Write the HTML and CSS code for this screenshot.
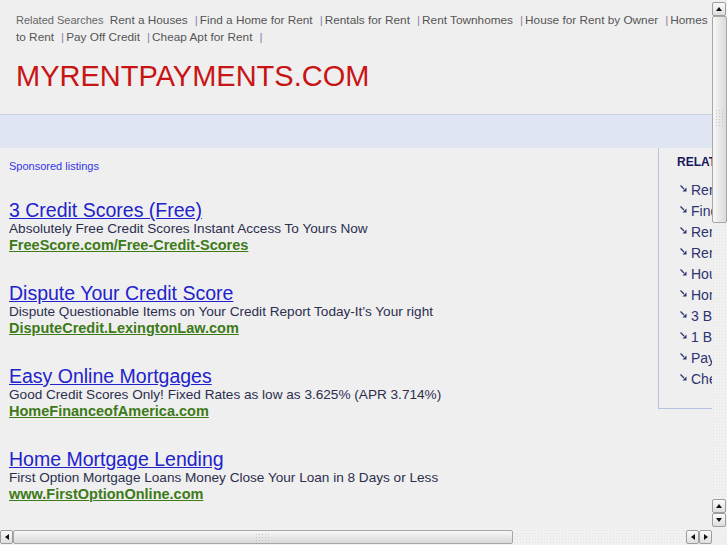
FILE: index.html
```html
<!DOCTYPE html>
<html lang="en">

<head>
    <meta charset="UTF-8">
    <title>myrentpayments.com</title>
    <link rel="stylesheet" href="styles.css">
</head>

<body>
    <div class="viewport">
        <div class="header">
            <div class="related">
                <span class="related-label">Related Searches</span>
                <a href="#">Rent a Houses</a><span class="sep">|</span><a href="#">Find a Home for Rent</a><span class="sep">|</span><a href="#">Rentals for Rent</a><span class="sep">|</span><a href="#">Rent Townhomes</a><span class="sep">|</span><a href="#">House for Rent by Owner</a><span class="sep">|</span><a href="#">Homes to Rent</a><span class="sep">|</span><a href="#">Pay Off Credit</a><span class="sep">|</span><a href="#">Cheap Apt for Rent</a><span class="sep">|</span>
            </div>
            <h1 class="site-title">MYRENTPAYMENTS.COM</h1>
        </div>

        <div class="band"></div>

        <div class="content">
            <div class="main">
                <div class="sponsored">Sponsored listings</div>

                <div class="ad">
                    <a href="#" class="ad-title">3 Credit Scores (Free)</a>
                    <div class="ad-desc">Absolutely Free Credit Scores Instant Access To Yours Now</div>
                    <a href="#" class="ad-url">FreeScore.com/Free-Credit-Scores</a>
                </div>

                <div class="ad">
                    <a href="#" class="ad-title">Dispute Your Credit Score</a>
                    <div class="ad-desc">Dispute Questionable Items on Your Credit Report Today-It's Your right</div>
                    <a href="#" class="ad-url">DisputeCredit.LexingtonLaw.com</a>
                </div>

                <div class="ad">
                    <a href="#" class="ad-title">Easy Online Mortgages</a>
                    <div class="ad-desc">Good Credit Scores Only! Fixed Rates as low as 3.625% (APR 3.714%)</div>
                    <a href="#" class="ad-url">HomeFinanceofAmerica.com</a>
                </div>

                <div class="ad">
                    <a href="#" class="ad-title">Home Mortgage Lending</a>
                    <div class="ad-desc">First Option Mortgage Loans Money Close Your Loan in 8 Days or Less</div>
                    <a href="#" class="ad-url">www.FirstOptionOnline.com</a>
                </div>
            </div>

            <div class="sidebar">
                <h3>RELATED SEARCHES</h3>
                <ul class="side-links">
                    <li><svg class="arrow" width="7" height="7" viewBox="0 0 7 7"><path d="M0.5 0.5 L4 4" stroke="#2a3070" stroke-width="1.2"/><path d="M6.5 2.5 L6.5 6.5 L2.5 6.5 Z" fill="#2a3070"/></svg><a href="#">Rent a Houses</a></li>
                    <li><svg class="arrow" width="7" height="7" viewBox="0 0 7 7"><path d="M0.5 0.5 L4 4" stroke="#2a3070" stroke-width="1.2"/><path d="M6.5 2.5 L6.5 6.5 L2.5 6.5 Z" fill="#2a3070"/></svg><a href="#">Find a Home for Rent</a></li>
                    <li><svg class="arrow" width="7" height="7" viewBox="0 0 7 7"><path d="M0.5 0.5 L4 4" stroke="#2a3070" stroke-width="1.2"/><path d="M6.5 2.5 L6.5 6.5 L2.5 6.5 Z" fill="#2a3070"/></svg><a href="#">Rentals for Rent</a></li>
                    <li><svg class="arrow" width="7" height="7" viewBox="0 0 7 7"><path d="M0.5 0.5 L4 4" stroke="#2a3070" stroke-width="1.2"/><path d="M6.5 2.5 L6.5 6.5 L2.5 6.5 Z" fill="#2a3070"/></svg><a href="#">Rent Townhomes</a></li>
                    <li><svg class="arrow" width="7" height="7" viewBox="0 0 7 7"><path d="M0.5 0.5 L4 4" stroke="#2a3070" stroke-width="1.2"/><path d="M6.5 2.5 L6.5 6.5 L2.5 6.5 Z" fill="#2a3070"/></svg><a href="#">House for Rent by Owner</a></li>
                    <li><svg class="arrow" width="7" height="7" viewBox="0 0 7 7"><path d="M0.5 0.5 L4 4" stroke="#2a3070" stroke-width="1.2"/><path d="M6.5 2.5 L6.5 6.5 L2.5 6.5 Z" fill="#2a3070"/></svg><a href="#">Homes to Rent</a></li>
                    <li><svg class="arrow" width="7" height="7" viewBox="0 0 7 7"><path d="M0.5 0.5 L4 4" stroke="#2a3070" stroke-width="1.2"/><path d="M6.5 2.5 L6.5 6.5 L2.5 6.5 Z" fill="#2a3070"/></svg><a href="#">3 Bedroom Homes for Rent</a></li>
                    <li><svg class="arrow" width="7" height="7" viewBox="0 0 7 7"><path d="M0.5 0.5 L4 4" stroke="#2a3070" stroke-width="1.2"/><path d="M6.5 2.5 L6.5 6.5 L2.5 6.5 Z" fill="#2a3070"/></svg><a href="#">1 Bedroom Apartments</a></li>
                    <li><svg class="arrow" width="7" height="7" viewBox="0 0 7 7"><path d="M0.5 0.5 L4 4" stroke="#2a3070" stroke-width="1.2"/><path d="M6.5 2.5 L6.5 6.5 L2.5 6.5 Z" fill="#2a3070"/></svg><a href="#">Pay Off Credit</a></li>
                    <li><svg class="arrow" width="7" height="7" viewBox="0 0 7 7"><path d="M0.5 0.5 L4 4" stroke="#2a3070" stroke-width="1.2"/><path d="M6.5 2.5 L6.5 6.5 L2.5 6.5 Z" fill="#2a3070"/></svg><a href="#">Cheap Apt for Rent</a></li>
                </ul>
            </div>
        </div>
    </div>

    <div class="vscroll">
        <div class="sb-btn"><span class="tri-up"></span></div>
        <div class="v-thumb"><span class="grip"></span></div>
        <div class="sb-track"></div>
        <div class="sb-btn"><span class="tri-up"></span></div>
        <div class="sb-btn"><span class="tri-down"></span></div>
    </div>

    <div class="hscroll">
        <div class="sb-btn"><span class="tri-left"></span></div>
        <div class="h-thumb"><span class="grip"></span></div>
        <div class="sb-track"></div>
        <div class="sb-btn"><span class="tri-left"></span></div>
        <div class="sb-btn"><span class="tri-right"></span></div>
    </div>

    <div class="corner"></div>
</body>

</html>
```

FILE: styles.css
```css
* {
    padding: 0;
    margin: 0;
    box-sizing: border-box;
}

body {
    display: grid;
    grid-template-columns: 712px 15px;
    grid-template-rows: 529px 16px;
    height: 545px;
    overflow: hidden;
    background-color: #efefef;
    font-family: "Liberation Sans", Arial, sans-serif;
}

.viewport {
    overflow: hidden;
    background-color: #efefef;
}

/* header */

.header {
    padding: 12px 0 22px 16px;
}

.related {
    height: 34px;
    font-size: 11.8px;
    line-height: 17px;
    color: #555;
}

.related-label {
    font-size: 11px;
    color: #666;
    margin-right: 3px;
}

.related a {
    color: #555;
    text-decoration: none;
}

.sep {
    color: #8c82b2;
    margin: 0 2px 0 7px;
}

.site-title {
    margin-top: 14px;
    font-size: 29px;
    line-height: 32px;
    font-weight: normal;
    color: #c81414;
}

.band {
    height: 34px;
    border-top: 1px solid #c9d1e4;
    background-color: #dfe5f3;
}

/* listings */

.content {
    display: flex;
    width: 880px;
}

.main {
    width: 658px;
    flex-shrink: 0;
    padding-left: 9px;
}

.sponsored {
    margin-top: 11px;
    font-size: 11px;
    line-height: 14px;
    color: #3434e8;
}

.ad {
    margin-top: 27px;
}

.sponsored + .ad {
    margin-top: 26px;
}

.ad-title {
    display: block;
    width: max-content;
    font-size: 19.5px;
    line-height: 22px;
    color: #2222cc;
}

.ad-desc {
    font-size: 13.6px;
    line-height: 15px;
    color: #2c2e4e;
}

.ad-url {
    display: block;
    width: max-content;
    font-size: 14.5px;
    line-height: 19px;
    font-weight: bold;
    color: #3d7a18;
}

/* sidebar */

.sidebar {
    width: 222px;
    flex-shrink: 0;
    height: 261px;
    border-left: 1px solid #b7c3e3;
    border-bottom: 1px solid #b7c3e3;
    padding: 7px 0 0 18px;
}

.sidebar h3 {
    font-size: 12px;
    line-height: 14px;
    color: #16185a;
    margin-bottom: 11px;
}

.side-links {
    list-style: none;
    padding-left: 3px;
}

.side-links li {
    display: flex;
    align-items: center;
    font-size: 14px;
    line-height: 21px;
    white-space: nowrap;
}

.arrow {
    margin: -4px 4px 0 0;
}

.side-links a {
    color: #2d3370;
    text-decoration: none;
}

/* scrollbars */

.vscroll,
.hscroll {
    display: flex;
    background-color: #f1f1f1;
    background-image: radial-gradient(#e2e2e2 0.7px, transparent 0.9px);
    background-size: 3px 3px;
}

.vscroll {
    flex-direction: column;
    padding-top: 2px;
    padding-bottom: 2px;
}

.hscroll {
    padding-top: 1px;
    padding-bottom: 1px;
}

.sb-track {
    flex: 1;
}

.sb-btn {
    width: 14px;
    height: 14px;
    flex-shrink: 0;
    border: 1px solid #9d9d9d;
    border-radius: 2px;
    background: linear-gradient(#fbfbfb, #dedede);
    display: flex;
    align-items: center;
    justify-content: center;
}

.hscroll .sb-btn {
    width: 13px;
}

.tri-up,
.tri-down,
.tri-left,
.tri-right {
    width: 0;
    height: 0;
}

.tri-up {
    border-left: 3px solid transparent;
    border-right: 3px solid transparent;
    border-bottom: 4px solid #111;
}

.tri-down {
    border-left: 3px solid transparent;
    border-right: 3px solid transparent;
    border-top: 4px solid #111;
}

.tri-left {
    border-top: 3px solid transparent;
    border-bottom: 3px solid transparent;
    border-right: 4px solid #111;
}

.tri-right {
    border-top: 3px solid transparent;
    border-bottom: 3px solid transparent;
    border-left: 4px solid #111;
}

.v-thumb {
    height: 207px;
    flex-shrink: 0;
    border: 1px solid #a6a6a6;
    border-radius: 2px;
    background: linear-gradient(to right, #f7f7f7, #dadada);
    display: flex;
    justify-content: center;
    padding-top: 92px;
}

.h-thumb {
    width: 500px;
    flex-shrink: 0;
    border: 1px solid #a6a6a6;
    border-radius: 2px;
    background: linear-gradient(#f7f7f7, #d9d9d9);
    display: flex;
    justify-content: center;
    align-items: center;
}

.v-thumb .grip {
    width: 9px;
    height: 18px;
}

.h-thumb .grip {
    width: 16px;
    height: 9px;
}

.grip {
    background-image: radial-gradient(#c4c4c4 0.8px, transparent 1px);
    background-size: 3px 3px;
}

.corner {
    background-color: #efefef;
}
```
